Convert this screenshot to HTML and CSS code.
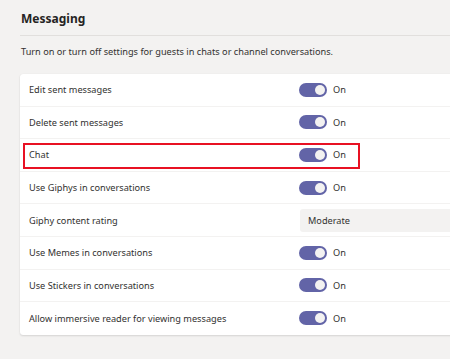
FILE: index.html
```html
<!DOCTYPE html>
<html>
<head>
<meta charset="utf-8">
<link rel="stylesheet" href="styles.css">
</head>
<body>
<main class="page">
  <h1 class="title">Messaging</h1>
  <p class="desc">Turn on or turn off settings for guests in chats or channel conversations.</p>
  <section class="card">
    <div class="row"><span class="label">Edit sent messages</span><span class="ctrl"><span class="toggle"><span class="knob"></span></span><span class="state">On</span></span></div>
    <div class="row"><span class="label">Delete sent messages</span><span class="ctrl"><span class="toggle"><span class="knob"></span></span><span class="state">On</span></span></div>
    <div class="row highlighted"><span class="label">Chat</span><span class="ctrl"><span class="toggle"><span class="knob"></span></span><span class="state">On</span></span><span class="mark"></span></div>
    <div class="row"><span class="label">Use Giphys in conversations</span><span class="ctrl"><span class="toggle"><span class="knob"></span></span><span class="state">On</span></span></div>
    <div class="row"><span class="label">Giphy content rating</span><span class="ctrl"><span class="select">Moderate</span></span></div>
    <div class="row"><span class="label">Use Memes in conversations</span><span class="ctrl"><span class="toggle"><span class="knob"></span></span><span class="state">On</span></span></div>
    <div class="row"><span class="label">Use Stickers in conversations</span><span class="ctrl"><span class="toggle"><span class="knob"></span></span><span class="state">On</span></span></div>
    <div class="row last"><span class="label">Allow immersive reader for viewing messages</span><span class="ctrl"><span class="toggle"><span class="knob"></span></span><span class="state">On</span></span></div>
  </section>
</main>
</body>
</html>
```
FILE: styles.css
```css
html, body {
  margin: 0;
  padding: 0;
  background: #f3f2f1;
  overflow: hidden;
}
body {
  font-family: "Noto Sans", "Open Sans", sans-serif;
  color: #252423;
  width: 450px;
  height: 359px;
}
.page {
  width: 520px;
  padding: 11px 0 0 20px;
}
.title {
  margin: 0;
  font-size: 12px;
  font-weight: 700;
  line-height: 16px;
  padding: 0 0 8px 1px;
  border-bottom: 1px solid #e1dfdd;
}
.desc {
  margin: 0;
  padding: 8.5px 0 0 1px;
  font-size: 9.2px;
  line-height: 14px;
  color: #323130;
  height: 38px;
  box-sizing: border-box;
}
.card {
  background: #ffffff;
  border-radius: 3px;
  box-shadow: 0 1px 2px rgba(0,0,0,0.12), 0 0 1px rgba(0,0,0,0.08);
}
.row {
  position: relative;
  display: grid;
  grid-template-columns: 270px 1fr;
  align-items: center;
  height: 32.6px;
  padding-left: 9px;
  border-bottom: 1px solid #f3f2f1;
  box-sizing: border-box;
  font-size: 9.2px;
  color: #323130;
}
.row.last { border-bottom: none; }
.ctrl {
  display: flex;
  align-items: center;
  gap: 6px;
}
.toggle {
  width: 28px;
  height: 14px;
  border-radius: 7px;
  background: #6264a7;
  display: flex;
  align-items: center;
  justify-content: flex-end;
  padding: 0 2px;
  box-sizing: border-box;
}
.knob {
  width: 10px;
  height: 10px;
  border-radius: 50%;
  background: #f3f2f1;
}
.state {
  font-size: 9.2px;
  color: #323130;
}
.select {
  margin-left: 1px;
  flex: 1;
  height: 23px;
  line-height: 23px;
  background: #f3f2f1;
  border-radius: 3px;
  padding-left: 8px;
  font-size: 9.2px;
  color: #323130;
}
.mark {
  position: absolute;
  left: 3px;
  top: 4px;
  width: 337px;
  height: 26px;
  border: 2px solid #e81123;
  box-sizing: border-box;
}
```
